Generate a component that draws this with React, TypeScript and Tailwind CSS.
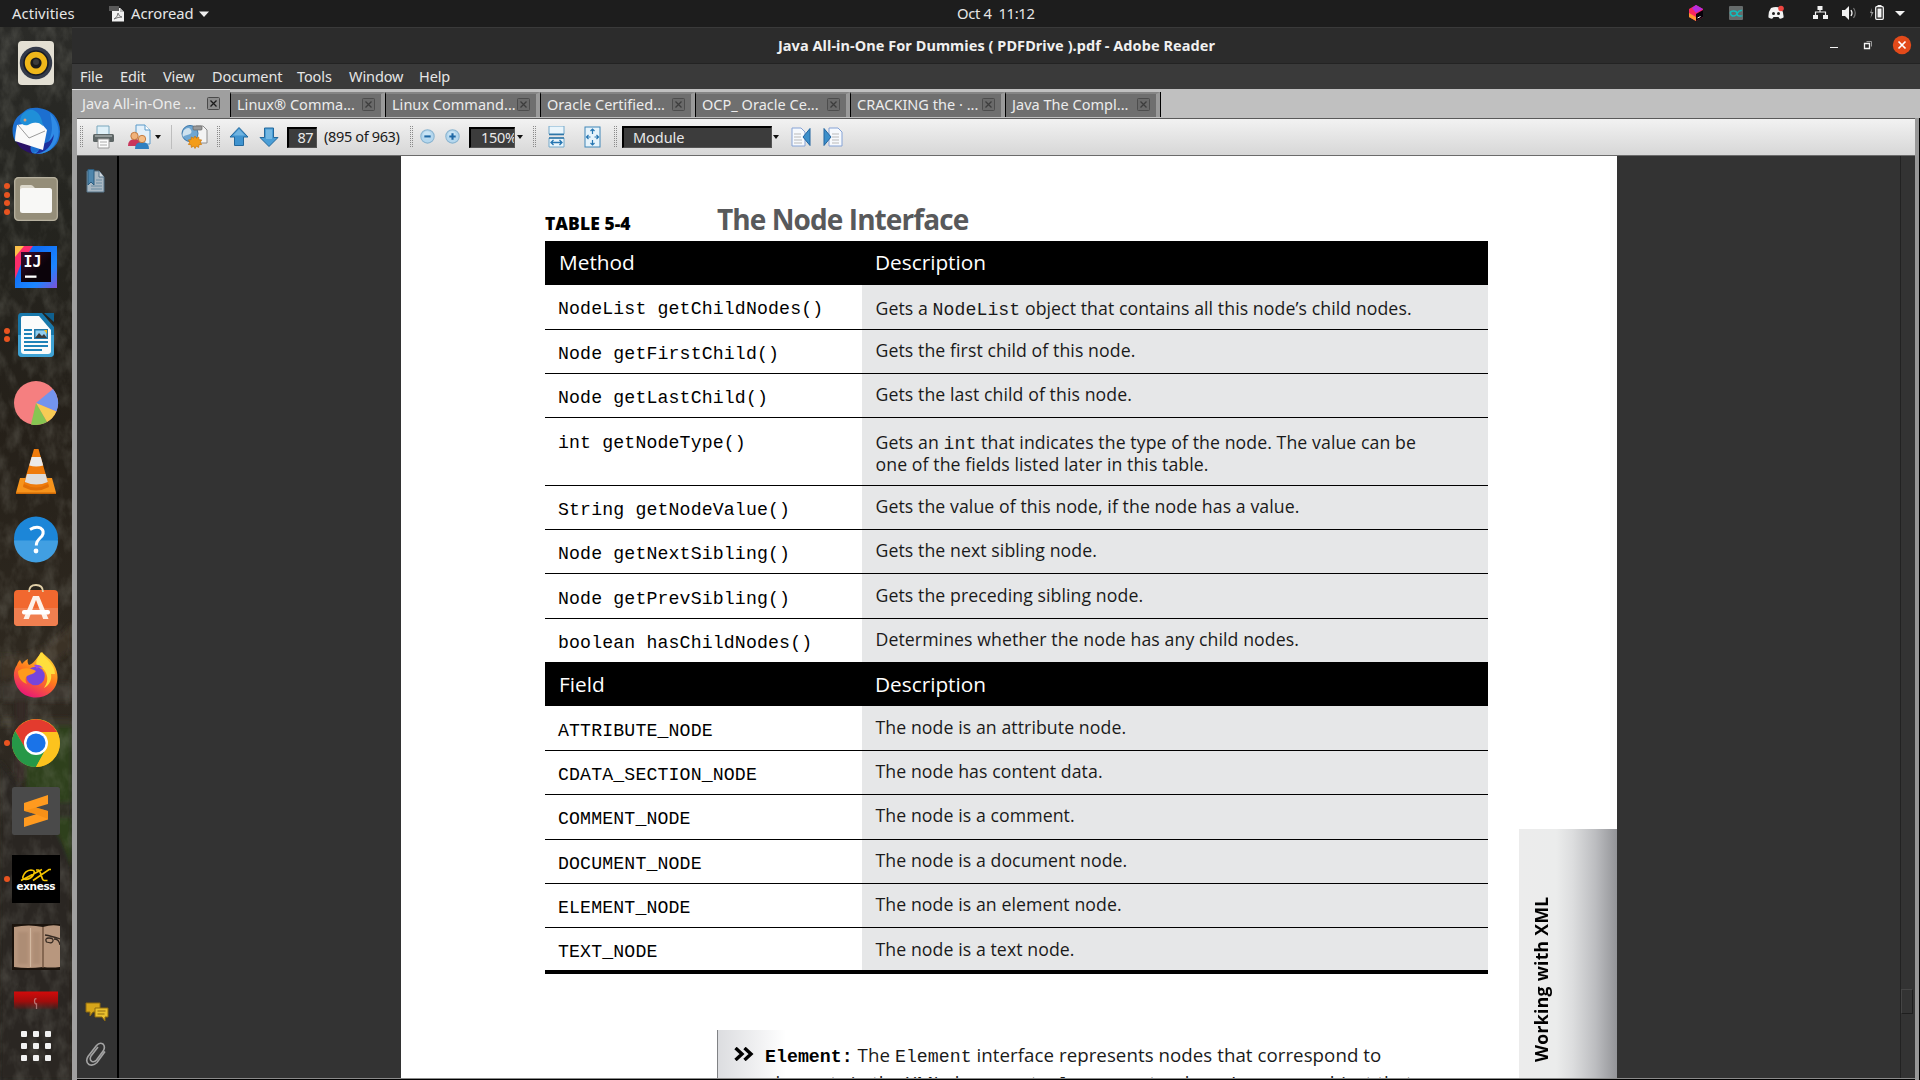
import React from "react";

const Mono = ({ children }: { children: React.ReactNode }) => (
  <span className="font-['Liberation_Mono'] text-[18.2px] leading-none font-normal tracking-[0.04px]">{children}</span>
);

type Row = { name: string; desc: React.ReactNode; h: string; descPad?: string; codePad?: string };

const methods: Row[] = [
  {
    name: "NodeList getChildNodes()",
    desc: (
      <>
        Gets a <Mono>NodeList</Mono> object that contains all this node’s child nodes.
      </>
    ),
    h: "h-[45px]",
    descPad: "pt-[12px]",
    codePad: "pt-[13px]",
  },
  { name: "Node getFirstChild()", desc: "Gets the first child of this node.", h: "h-[44px]" },
  { name: "Node getLastChild()", desc: "Gets the last child of this node.", h: "h-[44px]" },
  {
    name: "int getNodeType()",
    desc: (
      <>
        Gets an <Mono>int</Mono> that indicates the type of the node. The value can be
        <br />
        one of the fields listed later in this table.
      </>
    ),
    h: "h-[68px]",
    descPad: "pt-[13px]",
    codePad: "pt-[14px]",
  },
  { name: "String getNodeValue()", desc: "Gets the value of this node, if the node has a value.", h: "h-[44px]" },
  { name: "Node getNextSibling()", desc: "Gets the next sibling node.", h: "h-[44px]" },
  { name: "Node getPrevSibling()", desc: "Gets the preceding sibling node.", h: "h-[45px]", codePad: "pt-[14px]", descPad: "pt-[10px]" },
  { name: "boolean hasChildNodes()", desc: "Determines whether the node has any child nodes.", h: "h-[44px]" },
];

const fields: Row[] = [
  { name: "ATTRIBUTE_NODE", desc: "The node is an attribute node.", h: "h-[45px]", codePad: "pt-[14px]", descPad: "pt-[10px]" },
  { name: "CDATA_SECTION_NODE", desc: "The node has content data.", h: "h-[44px]", codePad: "pt-[13px]" },
  { name: "COMMENT_NODE", desc: "The node is a comment.", h: "h-[45px]", codePad: "pt-[13px]" },
  { name: "DOCUMENT_NODE", desc: "The node is a document node.", h: "h-[44px]", codePad: "pt-[13px]" },
  { name: "ELEMENT_NODE", desc: "The node is an element node.", h: "h-[44px]", codePad: "pt-[13px]" },
  { name: "TEXT_NODE", desc: "The node is a text node.", h: "h-[42px]", codePad: "pt-[13px]", descPad: "pt-[10px]" },
];

function TableHead({ label, h }: { label: string; h: string }) {
  return (
    <div className={`flex items-center bg-black text-[20.8px] text-white ${h}`}>
      <div className="w-[317px] pl-[14px]">{label}</div>
      <div className="pl-[13px]">Description</div>
    </div>
  );
}

function TableRows({ rows, last }: { rows: Row[]; last?: boolean }) {
  return (
    <>
      {rows.map((r, i) => (
        <div
          key={r.name}
          className={`flex ${r.h} ${last && i === rows.length - 1 ? "" : "border-b border-black"}`}
        >
          <div
            className={`w-[317px] pl-[13px] font-['Liberation_Mono'] text-[18.2px] leading-[22px] font-normal tracking-[0.14px] whitespace-pre ${r.codePad ?? "pt-[13px]"}`}
          >
            {r.name}
          </div>
          <div className={`flex-1 bg-[#e6e7e8] pl-[13.5px] leading-[22px] whitespace-nowrap text-[#1a1a1a] ${r.descPad ?? "pt-[9px]"}`}>
            {r.desc}
          </div>
        </div>
      ))}
    </>
  );
}

/* ---------- launcher ---------- */

const dockIcons: { dots: number; art: React.ReactNode }[] = [
  {
    dots: 0,
    art: (
      <>
        <rect x="6" y="2" width="36" height="44" rx="4" fill="#e3dfd3" />
        <circle cx="24" cy="24" r="16.2" fill="#343a49" />
        <circle cx="24" cy="24" r="12" fill="#efb71b" stroke="#171b25" strokeWidth="1.6" />
        <circle cx="24" cy="24" r="5.6" fill="#1b1b1b" />
        <circle cx="24" cy="23" r="3" fill="#3b3b3b" />
      </>
    ),
  },
  {
    dots: 0,
    art: (
      <>
        <path d="M14 3C20-1 34 0 42 8c8 9 8 24 0 32-6 6-14 8-22 6L3 34C-2 24 1 12 9 7z" fill="#1c6fd0" />
        <path d="M38 6c10 10 12 24 2 35-5 5-12 7-19 5 12-3 18-12 19-24 0-6-1-11-2-16z" fill="#2f8be6" />
        <path d="M3 32c3 8 8 12 18 15-3-3-3-6-2-9z" fill="#2a1266" />
        <path d="M30 36c6 1 10-4 12-9-1 12-9 19-19 20 4-3 6-6 7-11z" fill="#1b2f9e" />
        <path d="M5 18c8-1 16-4 24-2l6 7-4 20-28-9c0-5 1-11 2-16z" fill="#fafafa" />
        <path d="M6 18l11 13 16-7" fill="none" stroke="#9b9b9b" strokeWidth="1" />
        <path d="M8 14C9 6 15 2 21 3c6 2 9 8 10 16-5-5-10-4-15-1-4 1-7-1-8-4z" fill="#1f8fd8" />
        <circle cx="13" cy="13" r="1.5" fill="#d9a27c" />
      </>
    ),
  },
  {
    dots: 4,
    art: (
      <>
        <rect x="2" y="2" width="44" height="44" rx="4.5" fill="#958e79" />
        <rect x="2.7" y="2.7" width="42.6" height="42.6" rx="4" fill="none" stroke="#b7b19f" strokeWidth="1.2" />
        <path d="M8 22V12q0-2 2-2h9q1.500 0 2.500 1.500L23 13h0v8z" fill="#dcd8cb" />
        <rect x="8" y="13" width="32" height="25" rx="2.500" fill="#f8f8f6" />
      </>
    ),
  },
  {
    dots: 0,
    art: (
      <>
        <rect x="3" y="3" width="42" height="42" fill="url(#ij)" />
        <path d="M3 3h18L9 21 3 36z" fill="#fb2d6b" />
        <path d="M3 3h9L3 14z" fill="#fdc04a" />
        <rect x="9" y="9" width="30" height="30" fill="url(#ijc)" />
        <text x="11.500" y="24" fontSize="15" fontWeight="700" fill="#fff" fontFamily="DejaVu Sans Mono">
          IJ
        </text>
        <rect x="13" y="32.500" width="11.500" height="2.300" fill="#fff" />
      </>
    ),
  },
  {
    dots: 2,
    art: (
      <>
        <path d="M9 2h21l12 14v26q0 4-4 4H10q-4 0-4-4V6q0-4 3-4z" fill="#1878ab" />
        <path d="M6 24h36v18q0 4-4 4H10q-4 0-4-4z" fill="#3fa2d4" />
        <path d="M9 7q0-2 2-2h16l12 14v21q0 3-3 3H12q-3 0-3-3z" fill="#fbfbfb" />
        <path d="M32 2h10v9z" fill="#0f5f8d" />
        <path d="M12 19h8M12 23h8M12 27h8M12 31h24M12 35h24M12 39h18" stroke="#1f82b8" strokeWidth="2" />
        <rect x="22" y="18" width="14" height="10" fill="#2478a8" />
        <rect x="23.500" y="19.500" width="11" height="7" fill="#8fcdf0" />
        <path d="M23 27l4-5 3 3 2-2 3 4z" fill="#3b3b3b" />
        <path d="M32 19h3v4z" fill="#f2b91d" />
      </>
    ),
  },
  {
    dots: 0,
    art: (
      <>
        <circle cx="24" cy="24" r="22" fill="#f57f80" />
        <path d="M24 24L41 10a22 22 0 0 1 3.500 22.500z" fill="#7394ee" />
        <path d="M24 24l20.300 8.500A22 22 0 0 1 35 43z" fill="#f7cb55" />
        <path d="M24 24l11 19a22 22 0 0 1-16 2.500z" fill="#87c552" />
      </>
    ),
  },
  {
    dots: 0,
    art: (
      <>
        <path d="M8 31h32l4 14.500q0 1.500-1 1.500H5q-1 0-1-1.500z" fill="#f7941c" />
        <path d="M4 45.500h40V47H4z" fill="#cf6a06" />
        <path d="M22 2h4.500l10.500 37q-13 7-26 0z" fill="#ef7b0b" />
        <path d="M19.600 10h9.200l2.400 8.500q-7 2-14 0z" fill="#eceae8" />
        <path d="M15 27h18.500l2.300 8q-11.500 5-23 0z" fill="#dedcda" />
        <path d="M12 37q12 7 24 0l1 3q-13 7-26 0z" fill="#e06f07" />
      </>
    ),
  },
  {
    dots: 0,
    art: (
      <>
        <circle cx="24" cy="23.500" r="22" fill="#1c86d8" />
        <path d="M2 25.500h44a22 22 0 0 1-44 0z" fill="#419fe2" />
        <path d="M18 14.500q6-3.500 10.500-1.500 4.500 3 1.500 8-4 4-5 6-.7 1.500-.7 3.500" fill="none" stroke="#fff" strokeWidth="3" />
        <circle cx="24" cy="36" r="2.400" fill="#fff" />
      </>
    ),
  },
  {
    dots: 0,
    art: (
      <>
        <rect x="2" y="7" width="44" height="36" rx="4" fill="#f1682f" />
        <path d="M2 25h44v14q0 4-4 4H6q-4 0-4-4z" fill="#f07f50" />
        <path d="M17 9q0-7 7-7t7 7" fill="none" stroke="#e2d0a8" strokeWidth="1.800" />
        <path d="M11.500 36l9.500-23h6l9.500 23h-5.300L24 17l-7.200 19z" fill="#fdf1e9" />
        <rect x="10" y="27" width="28" height="4.500" rx="2" fill="#fff" />
      </>
    ),
  },
  {
    dots: 0,
    art: (
      <>
        <path
          d="M30 1c4 5 9 7 12 13 6 10 4 21-3 27-9 8-24 7-31-1C1 32 0 21 5 14c1-3 2-4 3-5l2 4c2-2 3-4 6-5-1 2 0 5 1 6 5-1 8-8 13-13z"
          fill="url(#fox)"
        />
        <path d="M29 1c-3 6-6 9-4 14 6 1 9 5 10 10s-1 9-3 12c6-3 8-9 7-14l4 0c0-10-9-14-14-22z" fill="#ffde3c" />
        <circle cx="23.500" cy="25" r="9.300" fill="#7745db" />
        <path d="M6 20c6-4 12-3 18 0-3 4-6 3-9 5-2 2-2 5 0 8-6-2-9-7-9-13z" fill="#ff9a1c" />
        <path d="M22 14c3-1 7 0 9 3-3-1-5-1-6 1z" fill="#9a4be8" />
      </>
    ),
  },
  {
    dots: 1,
    art: (
      <>
        <circle cx="24" cy="24" r="24" fill="#fcc31e" />
        <path d="M24 24L24 13H45A24 24 0 0 0 3.200 12L13.500 30z" fill="#e33b2e" />
        <path d="M3.200 12A24 24 0 0 0 24 48L34 29.500 13.800 30z" fill="#269848" />
        <path d="M34 30L24 48A24 24 0 0 0 45 13H24z" fill="#fcc31e" />
        <circle cx="24" cy="24" r="12" fill="#fff" />
        <circle cx="24" cy="24" r="9.600" fill="#1a73e8" />
      </>
    ),
  },
  {
    dots: 0,
    art: (
      <>
        <rect width="48" height="48" rx="2.500" fill="#4a4a4a" />
        <path d="M36 8v9L24 20.500 36 24v8.500L12 40v-9l12-3.700-12-3.500V16z" fill="#ff9a1f" />
        <path d="M12 24l12 3.300L36 32v-8l-12-3.500z" fill="#f08a12" opacity=".6" />
      </>
    ),
  },
  {
    dots: 1,
    art: (
      <>
        <rect width="48" height="48" fill="#000" />
        <path
          d="M9 25.500L30 14.500M14 24.500q-4 0-3-3 2-6 8-6.500 5 0 2.500 4.500-2 4-7.500 5M24 15h2.500q1 0 1.500 2l2.500 7q.5 1.500 2 1.500h3M39 14.500h-2L21 25.500"
          fill="none"
          stroke="#f5c400"
          strokeWidth="1.700"
        />
        <text x="4.500" y="35" fontSize="10.500" fontWeight="700" fill="#fff" fontFamily="DejaVu Sans" textLength="39">
          exness
        </text>
      </>
    ),
  },
  {
    dots: 0,
    art: (
      <>
        <rect y="1" width="48" height="46" fill="#1b130c" />
        <path d="M2 4q15-3 29 0 9-3 17-1v41q-9 1-17 0-15 2-29 0z" fill="#b8977e" />
        <path d="M31 4v41" stroke="#6a4e3a" strokeWidth="1.300" />
        <path d="M18.500 5v39" stroke="#d2b8a0" strokeWidth="1.200" />
        <path d="M6 9h10v32H6zM21 9h7v32h-7z" fill="#9b7c65" opacity=".35" filter="url(#inkrough)" />
        <path d="M33 12q6 1 15 4M34.500 19q-2-4 2.500-4t4 3-6.500 1zM42 16q5 0 6 6" fill="none" stroke="#352a22" strokeWidth="1.300" />
      </>
    ),
  },
  {
    dots: 0,
    art: (
      <>
        <rect x="2" y="0.500" width="44" height="18" fill="url(#red)" />
        <path d="M24.500 8q-2-1-2 2t2 3v5" fill="none" stroke="#c99" strokeWidth="1.300" opacity=".7" />
      </>
    ),
  },
];

function Dock() {
  return (
    <aside className="relative flex h-full w-[72px] shrink-0 flex-col overflow-hidden bg-[#28241f] pt-[2px]">
      <svg className="absolute inset-0" width="72" height="1053" viewBox="0 27 72 1053">
        <defs>
          <linearGradient id="wall" x1="0" y1="0" x2="0" y2="1">
            <stop offset="0" stopColor="#2b2b28" />
            <stop offset=".18" stopColor="#24241f" />
            <stop offset=".38" stopColor="#252019" />
            <stop offset=".62" stopColor="#2f2920" />
            <stop offset=".8" stopColor="#2b2722" />
            <stop offset="1" stopColor="#242222" />
          </linearGradient>
          <linearGradient id="ij" x1="0" y1="0" x2="1" y2="1">
            <stop offset=".3" stopColor="#0f6df5" />
            <stop offset=".7" stopColor="#1b86ff" />
            <stop offset="1" stopColor="#8052d8" />
          </linearGradient>
          <linearGradient id="ijc" x1="0" y1="0" x2="1" y2="1">
            <stop offset="0" stopColor="#3a0a2c" />
            <stop offset=".6" stopColor="#0b030a" />
          </linearGradient>
          <linearGradient id="fox" x1=".8" y1="0" x2=".3" y2="1">
            <stop offset=".1" stopColor="#ffce30" />
            <stop offset=".5" stopColor="#ff7a1c" />
            <stop offset="1" stopColor="#e8137a" />
          </linearGradient>
          <linearGradient id="red" x1="0" y1="0" x2="0" y2="1">
            <stop offset="0" stopColor="#d30b0b" />
            <stop offset=".55" stopColor="#a00d0c" />
            <stop offset="1" stopColor="#8c0d0c" stopOpacity=".1" />
          </linearGradient>
          <filter id="inkrough">
            <feGaussianBlur stdDeviation=".8" />
          </filter>
          <filter id="grain" x="0" y="0" width="1" height="1">
            <feTurbulence type="fractalNoise" baseFrequency=".07 .04" numOctaves="4" seed="7" />
            <feColorMatrix values="0 0 0 0 .42  0 0 0 0 .42  0 0 0 0 .36  1.600 0 0 0 -.65" />
          </filter>
          <filter id="soft">
            <feGaussianBlur stdDeviation="2" />
          </filter>
        </defs>
        <rect y="27" width="72" height="1053" fill="url(#wall)" />
        <g filter="url(#soft)">
          <path d="M0 655q40 5 72-32v26Q40 676 0 680z" fill="#3a3128" />
          <path d="M26 722h46v145l-14-28-12-22-20-20z" fill="#2f401b" />
          <path d="M0 683h72v18H0z" fill="#3b352d" />
          <path d="M0 718h72v8H0z" fill="#3a342c" />
          <path d="M16 700h10v80H16z" fill="#352b25" />
          <path d="M26 802h46v16H26z" fill="#28251d" />
          <path d="M0 760q20 30 40 50t32 60v210H0z" fill="#2a2624" />
        </g>
        <rect y="27" width="72" height="1053" filter="url(#grain)" opacity=".3" />
      </svg>
      {dockIcons.map((d, i) => (
        <div key={i} className="relative flex h-[68px] shrink-0 items-center">
          <div className="flex w-[12px] flex-col items-center gap-[2.700px] pl-[2px]">
            {Array.from({ length: d.dots }, (_, k) => (
              <span key={k} className="size-[6px] shrink-0 rounded-full bg-[#e95420]" />
            ))}
          </div>
          <svg width="48" height="48" viewBox="0 0 48 48">
            {d.art}
          </svg>
        </div>
      ))}
      <div className="relative -mt-[18px] ml-[21px] grid w-[30px] grid-cols-3 gap-[6px]">
        {Array.from({ length: 9 }, (_, k) => (
          <span key={k} className="size-[6px] rounded-[1px] bg-[#f2f2f2]" />
        ))}
      </div>
    </aside>
  );
}

/* ---------- top bar ---------- */

function TopBar() {
  return (
    <header className="relative flex h-[27px] shrink-0 items-center bg-[#1d1d1d] text-[14.800px] text-[#e6e6e6]">
      <div className="w-[109px] pl-[12px] tracking-[0.100px]">Activities</div>
      <svg width="16" height="16" viewBox="0 0 16 16">
        <path d="M3 2h8l4 4v9.500H3z" fill="#f1f1f1" />
        <path d="M0 0h10v5H0z" fill="#5a5a5a" />
        <path d="M11 2l4 4h-4z" fill="#bbb" />
        <path d="M5 13q4-2 4-6 1 4 4 4-4 0-8 2z" fill="none" stroke="#777" />
      </svg>
      <div className="w-[74px] pl-[6px] tracking-[-0.050px]">Acroread</div>
      <svg width="10" height="6" viewBox="0 0 10 6">
        <path d="M0 .5h10L5 6z" fill="#eee" />
      </svg>
      <div className="absolute top-[2px] left-[957px] tracking-[-0.360px] whitespace-pre">Oct 4  11:12</div>
      <svg className="ml-auto" width="240" height="27" viewBox="1680 0 240 27">
        <path d="M1696 5l7 4v8l-7 4-7-4V9z" fill="#f9265f" />
        <path d="M1696 5l7 4-7 4-4-5z" fill="#b52ee0" />
        <path d="M1689 13v4l7 4v-4z" fill="#ff9730" />
        <path d="M1703 10v7l-7 4v-7z" fill="#08010a" />
        <path d="M1697.500 18l3-1.500" stroke="#fff" />
        <rect x="1729" y="6" width="14" height="14" rx="1" fill="#666b6b" />
        <path d="M1742 10.500q-3-.5-4.500 2.500t-4 3-3-2.500 3-2.500 3.500 2.500 2.500 2.500 2.500-.5" fill="none" stroke="#12bdbd" strokeWidth="1.500" />
        <path d="M1771 8q5-2 10 0 3 5 2.500 9.500-2 1.500-4 1l-1-1.500h-5l-1 1.500q-2 .5-4-1Q1768 12 1771 8z" fill="#f3f3f3" />
        <circle cx="1773.500" cy="13.500" r="1.500" fill="#1d1d1d" />
        <circle cx="1778.500" cy="13.500" r="1.500" fill="#1d1d1d" />
        <circle cx="1781" cy="8.500" r="2.800" fill="#ee4540" />
        <path d="M1817.500 6h5v4h-5zM1813 15h5v4h-5zM1823 15h5v4h-5z" fill="#f2f2f2" />
        <path d="M1820 9v3M1815.500 16v-4h10v4" fill="none" stroke="#f2f2f2" strokeWidth="1.200" />
        <path d="M1842 10h3l4-4v14l-4-4h-3z" fill="#f2f2f2" />
        <path d="M1851 10q2 3 0 6" fill="none" stroke="#f2f2f2" strokeWidth="1.300" />
        <path d="M1853.500 8q3.500 5 0 10" fill="none" stroke="#777" strokeWidth="1.200" />
        <path d="M1872 8l-2 5h1.500l-1 5 3-6h-2z" fill="#999" />
        <rect x="1875.700" y="6.700" width="7.600" height="12.600" rx="1" fill="none" stroke="#f2f2f2" strokeWidth="1.300" />
        <path d="M1877.500 5h4v1.500h-4zM1877.500 8.500h4v9h-4z" fill="#f2f2f2" />
        <path d="M1895 11h10l-5 5z" fill="#f2f2f2" />
      </svg>
    </header>
  );
}

/* ---------- window chrome ---------- */

const menus: [string, string][] = [
  ["File", "w-[40px]"],
  ["Edit", "w-[43px]"],
  ["View", "w-[49px]"],
  ["Document", "w-[85px]"],
  ["Tools", "w-[52px]"],
  ["Window", "w-[70px]"],
  ["Help", "w-[40px]"],
];

const tabs = [
  "Linux® Comma...",
  "Linux Command...",
  "Oracle Certified...",
  "OCP_ Oracle Ce...",
  "CRACKING the · ...",
  "Java The Compl...",
];

const TabClose = ({ active }: { active?: boolean }) => (
  <svg width="14" height="14" viewBox="0 0 14 14" className="shrink-0">
    <rect x=".5" y=".5" width="12" height="12" rx="1" fill={active ? "#8d8d8d" : "#6a6a6a"} stroke={active ? "#4a4a4a" : "#4d4d4d"} />
    <path d="M3.500 3.500l6 6M9.500 3.500l-6 6" stroke={active ? "#1c1c1c" : "#3d3d3d"} strokeWidth="1.300" />
  </svg>
);

function TabStrip() {
  return (
    <div className="flex h-[29px] bg-[#c0c0c0] text-[14.500px] text-[#ececec]">
      <div className="flex w-[158px] items-center border-t border-[#e2e2e2] bg-[#9f9f9f] pb-[1px] pl-[10px]">
        <span className="w-[125px] tracking-[0px] whitespace-nowrap">Java All-in-One ...</span>
        <TabClose active />
      </div>
      {tabs.map((t) => (
        <div
          key={t}
          className="mt-[3px] mb-[1px] flex w-[155px] items-center border-t-2 border-r-[4px] border-l border-t-[#858585] border-r-[#9a9a9a] border-l-black bg-[#6f6f6f] pb-[2px] pl-[6px]"
        >
          <span className="w-[125px] tracking-[0.020px] whitespace-nowrap">{t}</span>
          <TabClose />
        </div>
      ))}
      <div className="mt-[3px] mb-[1px] w-px bg-black" />
    </div>
  );
}

const Grip = () => (
  <svg width="4" height="22" viewBox="0 0 4 22" className="shrink-0">
    <path d="M.5 0v22M2.500 0v22" stroke="#8a8a8a" strokeDasharray="1 1" />
  </svg>
);

const Caret = () => (
  <svg width="6" height="4" viewBox="0 0 6 4" className="shrink-0">
    <path d="M0 0h6L3 4z" fill="#111" />
  </svg>
);

function Toolbar() {
  return (
    <div className="flex h-[37px] items-center border-b border-[#6b6b6b] bg-linear-to-b from-[#f2f2f2] to-[#d7d7d7] pl-[3px] text-[14.500px] text-[#1a1a1a]">
      <Grip />
      <svg className="ml-[8px]" width="24" height="24" viewBox="0 0 24 24">
        <path d="M5 1h12v9H5z" fill="#dff0f8" stroke="#7ba7bd" />
        <rect x="1" y="9" width="21" height="8" rx="1.500" fill="#5d6565" />
        <path d="M3 10h17v2H3z" fill="#929999" />
        <path d="M6 14h11v9H6z" fill="#fdfdfd" stroke="#999" />
        <path d="M8 17h7M8 20h7" stroke="#aaa" />
      </svg>
      <svg className="ml-[11px]" width="26" height="26" viewBox="0 0 26 26">
        <path d="M9 1h9l5 5v14H9z" fill="#e3f0fa" stroke="#5b9ac9" />
        <path d="M18 1v5h5" fill="#fff" stroke="#5b9ac9" />
        <path d="M1 22q0-7 7-7t7 7z" fill="#c8365c" />
        <circle cx="7.500" cy="12" r="3.700" fill="#f0b27a" stroke="#b86a2c" strokeWidth=".8" />
        <path d="M8 25q0-7 7-7t7 7z" fill="#2e7fc0" />
        <circle cx="15" cy="15" r="3.700" fill="#f4bd86" stroke="#b86a2c" strokeWidth=".8" />
      </svg>
      <div className="ml-[2px] flex">
        <Caret />
      </div>
      <div className="ml-[10px] h-[24px] w-px bg-[#bdbdbd]" />
      <svg className="ml-[9px]" width="27" height="26" viewBox="0 0 27 26">
        <path d="M15 2h7l4 4v13H15z" fill="#f3f3f3" stroke="#8c8c8c" />
        <circle cx="9" cy="9.500" r="8" fill="#6ea6d2" stroke="#3a75a8" />
        <path d="M3 6q5-4 7 0t-4 5-3 4q-3-4 0-9z" fill="#cfe2ef" />
        <rect x="12" y="2" width="9" height="4" rx="1" fill="#999" stroke="#666" strokeWidth=".7" />
        <path
          d="M14 12l1.300 2.200 2.400-1.200.2 2.700 2.700.2-1.300 2.300 1.300 2.300-2.700.2-.2 2.700-2.400-1.200L14 24.500l-1.300-2.300-2.400 1.200-.2-2.700-2.700-.2 1.300-2.300-1.300-2.300 2.700-.2.200-2.700 2.400 1.200z"
          fill="#f39c18"
          stroke="#c87408"
          strokeWidth=".7"
        />
      </svg>
      <div className="ml-[9px] flex">
        <Grip />
      </div>
      <svg className="ml-[8px]" width="20" height="22" viewBox="0 0 20 22">
        <path d="M10 1.500L19 11h-4.500v8.500h-9V11H1z" fill="#3f93cf" stroke="#23689c" />
        <path d="M10 3l6 6.500H4z" fill="#6fb3e0" />
      </svg>
      <svg className="ml-[10px]" width="20" height="22" viewBox="0 0 20 22">
        <path d="M10 20.500L1 11.500h4.500V2h9v9.500H19z" fill="#4a9ed6" stroke="#23689c" />
        <path d="M7 3.500h6V13H7z" fill="#74b8e3" />
      </svg>
      <div className="ml-[8px] flex h-[21px] w-[30px] items-center justify-end border-2 border-r border-b border-black border-r-[#555] border-b-[#555] bg-[#3c3c3c] pr-[3px] tracking-[-0.600px] text-[#e8e8e8]">
        87
      </div>
      <div className="ml-[7px] w-[86px] tracking-[-0.350px] whitespace-nowrap">(895 of 963)</div>
      <Grip />
      {["M4 7h6", "M4 7h6M7 4v6"].map((d, i) => (
        <svg key={d} className={i ? "ml-[10px]" : "ml-[6px]"} width="15" height="17" viewBox="0 0 14 16">
          <circle cx="7" cy="7" r="6.300" fill="#b4d7ee" stroke="#8ab4d0" />
          <circle cx="6.500" cy="5.500" r="3.500" fill="#d3e9f6" opacity=".7" />
          <path d={d} stroke="#1f68a5" strokeWidth="2" />
        </svg>
      ))}
      <div className="ml-[9px] flex h-[21px] w-[46px] items-center overflow-hidden border-2 border-r border-b border-black border-r-[#555] border-b-[#555] bg-[#3c3c3c] pl-[10px] tracking-[-0.300px] text-[#e8e8e8]">
        150%
      </div>
      <div className="ml-[2px] flex">
        <Caret />
      </div>
      <div className="ml-[10px] flex">
        <Grip />
      </div>
      <svg className="ml-[11px]" width="18" height="22" viewBox="0 0 18 22">
        <path d="M1 0h15v8H1zM1 12h15v9H1z" fill="#eaf5fb" stroke="#74a9cb" />
        <path d="M1 8.500h15M1 12h15" stroke="#2d76a8" strokeWidth="1.500" />
        <path d="M3 16.500h11M5.500 14l-2.500 2.500 2.500 2.500M11.500 14l2.500 2.500-2.500 2.500" fill="none" stroke="#2676b2" strokeWidth="1.300" />
      </svg>
      <svg className="ml-[18px]" width="18" height="22" viewBox="0 0 18 22">
        <rect x="1" y="1" width="15" height="20" fill="#e6f3fb" stroke="#3f86b7" />
        <path
          d="M8.500 3v5M6.500 5l2-2 2 2M8.500 19v-5M6.500 17l2 2 2-2M2.500 11h4M4.500 9l-2 2 2 2M14.500 11h-4M12.500 9l2 2-2 2"
          fill="none"
          stroke="#2676b2"
          strokeWidth="1.200"
        />
      </svg>
      <div className="ml-[12px] flex">
        <Grip />
      </div>
      <div className="ml-[4px] flex h-[22px] w-[150px] items-center border-2 border-r border-b border-black border-r-[#555] border-b-[#555] bg-[#3c3c3c] pl-[9px] tracking-[-0.050px] text-[#e8e8e8]">
        Module
      </div>
      <div className="ml-[1px] flex">
        <Caret />
      </div>
      <svg className="ml-[12px]" width="22" height="20" viewBox="0 0 22 20">
        <path d="M1 1h9l4 4v14H1z" fill="#f6f9fd" stroke="#86a3d6" />
        <path d="M3 7h7M3 10h7M3 13h8M3 16h8" stroke="#b9b9b9" />
        <path d="M19 1.500v17L12 10z" fill="#3c8fca" stroke="#2165a0" />
      </svg>
      <svg className="ml-[10px]" width="22" height="20" viewBox="0 0 22 20">
        <path d="M6 1h9l4 4v14H6z" fill="#f6f9fd" stroke="#86a3d6" />
        <path d="M9 7h7M9 10h7M9 13h7M9 16h7" stroke="#b9b9b9" />
        <path d="M1 1.500v17L8 10z" fill="#3c8fca" stroke="#2165a0" />
      </svg>
    </div>
  );
}

/* ---------- document ---------- */

function Page() {
  return (
    <main className="relative flex h-full w-[1216px] shrink-0 overflow-hidden bg-white font-['Open_Sans'] text-black">
      <div className="ml-[144px] flex w-[943px] shrink-0 flex-col">
        <div className="flex h-[85px] shrink-0 items-end pb-[4px]">
          <div className="w-[172px] pb-[2px] text-[17.400px] leading-[24px] font-extrabold tracking-[0.100px]">TABLE 5-4</div>
          <div className="text-[28px] leading-[36px] font-bold tracking-[-0.920px] text-[#58595b]">The Node Interface</div>
        </div>
        <div className="border-b-4 border-black text-[17.700px] tracking-[0.080px]">
          <div className="tracking-normal">
            <TableHead label="Method" h="h-[44px]" />
          </div>
          <TableRows rows={methods} />
          <div className="tracking-normal">
            <TableHead label="Field" h="h-[43px]" />
          </div>
          <TableRows rows={fields} last />
        </div>
        <div className="mt-[56px] ml-[172px] flex h-[80px] w-[771px] shrink-0 border-l border-[#808285] bg-linear-to-r from-[#dcdde0] to-white to-[68px] pt-[11px] pl-[16px]">
          <svg className="mt-[6px]" width="20" height="14" viewBox="0 0 20 14">
            <path d="M1.500 1L8 7l-6.500 6M10.500 1L17 7l-6.500 6" fill="none" stroke="#000" strokeWidth="3.400" />
          </svg>
          <div className="ml-[11px] text-[18.700px] leading-[28px] tracking-[0.050px] whitespace-nowrap text-[#1a1a1a]">
            <b className="font-['Liberation_Mono'] text-[18.200px] leading-none font-bold text-black">Element:</b> The{" "}
            <Mono>Element</Mono> interface represents nodes that correspond to
            <br />
            elements in the XML document. <Mono>Element</Mono> extends <Mono>Node</Mono>, so any object that
          </div>
        </div>
      </div>
      <div className="mt-[673px] ml-auto flex h-[260px] w-[98px] bg-[linear-gradient(90deg,#ececec_0%,#ebecec_38%,#dcddde_55%,#bcbdc0_78%,#939498_100%)] pl-[10px]">
        <div className="h-[233px] rotate-180 text-[17.600px] leading-[24px] font-bold tracking-[0.300px] whitespace-nowrap [writing-mode:vertical-rl]">
          Working with XML
        </div>
      </div>
    </main>
  );
}

function NavPanel() {
  return (
    <nav className="flex h-full w-[42px] shrink-0 flex-col items-start border-r-2 border-black bg-[#333] pt-[13px] pl-[8px]">
      <svg width="22" height="26" viewBox="0 0 22 26">
        <path d="M2 2h12l5 6v15H2z" fill="#a9b7c2" stroke="#56748a" />
        <path d="M14 2v6h5" fill="#d0d8de" stroke="#56748a" />
        <path d="M11 11h6M11 14h6M6 17h11M6 20h11" stroke="#6a8ba1" />
        <path d="M3 .5h6V16l-3-3-3 3z" fill="#4e86ad" stroke="#2d5c7e" />
      </svg>
      <svg className="mt-auto" width="24" height="20" viewBox="0 0 24 20">
        <path d="M1 1h14v9H8l-3 4v-4H1z" fill="#d6a51a" stroke="#8e6a10" />
        <path d="M10 6h13v9h-3v4l-3-4h-7z" fill="#e9c02e" stroke="#8e6a10" />
        <path d="M12.500 9h8M12.500 12h7" stroke="#8e6a10" />
      </svg>
      <svg className="mt-[19px] mb-[11px]" width="24" height="26" viewBox="0 0 24 26">
        <path
          d="M13 6L6 15q-2 4 1 5.500 2.500 1 4.500-1.500l7-9.500q2-4-.5-6.500-3.500-2-6.500 1.500L3 15.500q-3 5 1 8 4 2 8-2l8-11"
          fill="none"
          stroke="#a3a3a3"
          strokeWidth="1.600"
        />
      </svg>
    </nav>
  );
}

export default function App() {
  return (
    <div className="flex h-[1080px] w-[1920px] flex-col overflow-hidden bg-black font-['Noto_Sans',sans-serif]">
      <TopBar />
      <div className="flex min-h-0 flex-1">
        <Dock />
        <div className="flex min-w-0 flex-1 flex-col">
          <div className="relative flex h-[37px] shrink-0 items-center justify-end border-t border-b border-t-[#3a3a3a] border-b-[#232323] bg-[#2c2c2c]">
            <div className="absolute left-[706px] text-[14.500px] font-bold tracking-[0.060px] whitespace-pre text-[#f0f0f0]">
              Java All-in-One For Dummies ( PDFDrive ).pdf - Adobe Reader
            </div>
            <svg width="100" height="35" viewBox="1820 28 100 35">
              <path d="M1830 47.500h8" stroke="#f4f4f4" />
              <path d="M1864.500 43.500h5v5h-5z" fill="none" stroke="#f4f4f4" strokeWidth="1.300" />
              <path d="M1866.500 41.500h5v5" fill="none" stroke="#999" />
              <circle cx="1902" cy="45" r="9.200" fill="#e34a1a" />
              <path d="M1898.500 41.500l7 7M1905.500 41.500l-7 7" stroke="#fff" strokeWidth="1.700" />
            </svg>
          </div>
          <div className="flex h-[25px] shrink-0 items-center bg-[#3a3a3a] pl-[8px] text-[14.500px] tracking-[-0.100px] text-[#e6e6e6]">
            {menus.map(([m, w]) => (
              <span key={m} className={w}>
                {m}
              </span>
            ))}
          </div>
          <div className="flex min-h-0 flex-1 flex-col">
            <TabStrip />
            <div className="flex min-h-0 flex-1 border-l-[5px] border-[#a0a0a0]">
              <div className="flex min-w-0 flex-1 flex-col">
                <div className="h-px shrink-0 bg-[#5a5a5a]" />
                <Toolbar />
                <div className="flex min-h-0 flex-1 border-b border-[#8b8b8b] bg-[#333]">
                  <NavPanel />
                  <div className="w-[282px] shrink-0" />
                  <Page />
                  <div className="ml-auto flex w-[15px] flex-col border-l border-[#222] pr-[2px]">
                    <div className="mt-[833px] h-[25px] border border-[#454545] border-r-[#1e1e1e] border-b-[#1e1e1e]" />
                  </div>
                </div>
                <div className="h-px shrink-0 bg-black" />
              </div>
              <div className="w-[4px] bg-[#979797]" />
              <div className="w-px bg-black" />
            </div>
          </div>
        </div>
      </div>
    </div>
  );
}
